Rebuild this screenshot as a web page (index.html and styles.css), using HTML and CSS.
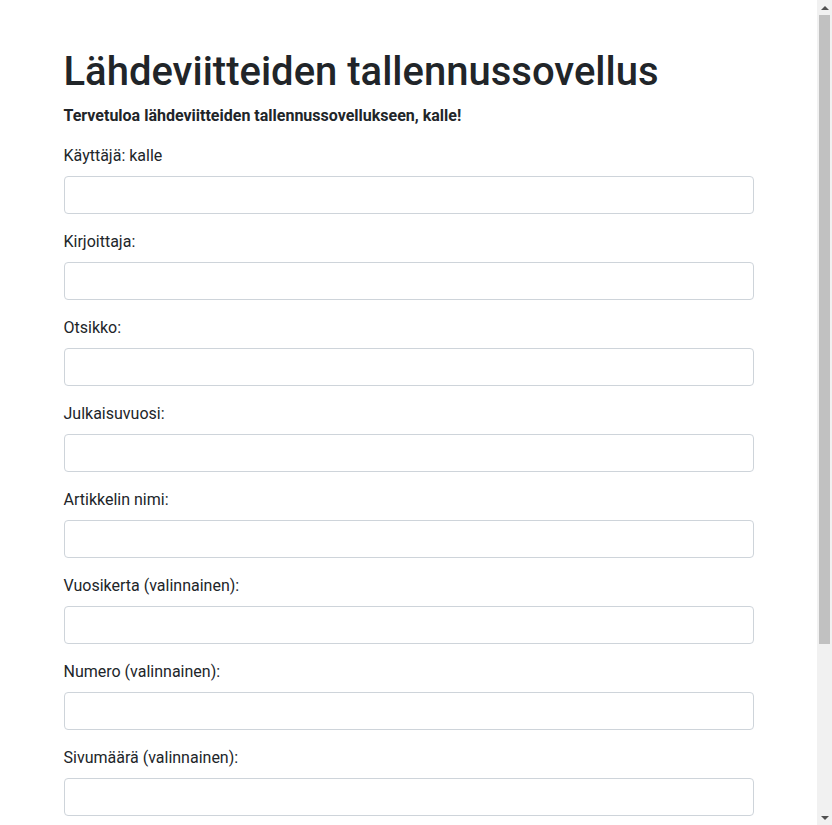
FILE: index.html
```html
<!DOCTYPE html>
<html lang="fi">
<head>
<meta charset="utf-8">
<title>Lähdeviitteiden tallennussovellus</title>
<link rel="stylesheet" href="styles.css">
</head>
<body>
<main class="container">
  <h1 class="title">Lähdeviitteiden tallennussovellus</h1>
  <p class="welcome">Tervetuloa lähdeviitteiden tallennussovellukseen, kalle!</p>
  <form class="form">
    <div class="form-group">
      <label class="label" for="f0">Käyttäjä: kalle</label>
      <input class="form-control" id="f0" type="text">
    </div>
    <div class="form-group">
      <label class="label" for="f1">Kirjoittaja:</label>
      <input class="form-control" id="f1" type="text">
    </div>
    <div class="form-group">
      <label class="label" for="f2">Otsikko:</label>
      <input class="form-control" id="f2" type="text">
    </div>
    <div class="form-group">
      <label class="label" for="f3">Julkaisuvuosi:</label>
      <input class="form-control" id="f3" type="text">
    </div>
    <div class="form-group">
      <label class="label" for="f4">Artikkelin nimi:</label>
      <input class="form-control" id="f4" type="text">
    </div>
    <div class="form-group">
      <label class="label" for="f5">Vuosikerta (valinnainen):</label>
      <input class="form-control" id="f5" type="text">
    </div>
    <div class="form-group">
      <label class="label" for="f6">Numero (valinnainen):</label>
      <input class="form-control" id="f6" type="text">
    </div>
    <div class="form-group">
      <label class="label" for="f7">Sivumäärä (valinnainen):</label>
      <input class="form-control" id="f7" type="text">
    </div>
    <div class="form-group">
      <label class="label" for="f8">Kuukausi (valinnainen):</label>
      <input class="form-control" id="f8" type="text">
    </div>
    <div class="form-group">
      <label class="label" for="f9">Huomautus (valinnainen):</label>
      <input class="form-control" id="f9" type="text">
    </div>
    <button class="btn" type="submit">Tallenna</button>
  </form>
</main>
<div class="scrollbar" aria-hidden="true">
  <div class="scroll-arrow scroll-up"></div>
  <div class="scroll-thumb"></div>
  <div class="scroll-arrow scroll-down"></div>
</div>
</body>
</html>
```
FILE: styles.css
```css
*, *::before, *::after { box-sizing: border-box; }
html, body { margin: 0; padding: 0; }
body {
  font-family: Roboto, "Liberation Sans", Arial, sans-serif;
  font-size: 16px;
  line-height: 1.5;
  color: #212529;
  background: #fff;
  padding-right: 15px;
}
.container {
  max-width: 720px;
  margin: 48px auto 0;
  padding: 0 15px;
}
.title {
  font-size: 40px;
  font-weight: 500;
  line-height: 1.2;
  margin: 0 0 8px;
}
.welcome {
  font-weight: 700;
  margin: 0 0 16px;
}
.form { margin: 0; }
.form-group { margin-bottom: 16px; }
.label {
  display: inline-block;
  margin-bottom: 8px;
}
.form-control {
  display: block;
  width: 100%;
  height: 38px;
  padding: 6px 12px;
  font: inherit;
  color: #495057;
  background: #fff;
  border: 1px solid #ced4da;
  border-radius: 4px;
  margin: 0;
}
.btn {
  display: inline-block;
  height: 38px;
  padding: 6px 12px;
  font: inherit;
  color: #fff;
  background: #007bff;
  border: 1px solid #007bff;
  border-radius: 4px;
  vertical-align: top;
}

/* imitation of the browser's vertical scrollbar */
.scrollbar {
  position: fixed;
  top: 0;
  right: 0;
  width: 15px;
  height: 100vh;
  background: #f1f1f1;
  display: flex;
  flex-direction: column;
  align-items: center;
}
.scroll-arrow {
  flex: 0 0 15px;
  width: 15px;
  display: flex;
  align-items: center;
  justify-content: center;
}
.scroll-arrow::before {
  content: "";
  width: 0;
  height: 0;
  border-left: 4px solid transparent;
  border-right: 4px solid transparent;
}
.scroll-up::before { border-bottom: 4px solid #505050; }
.scroll-down::before { border-top: 4px solid #505050; }
.scroll-thumb {
  width: 11px;
  height: 629px;
  background: #c1c1c1;
}
.scroll-down { margin-top: auto; }
```
